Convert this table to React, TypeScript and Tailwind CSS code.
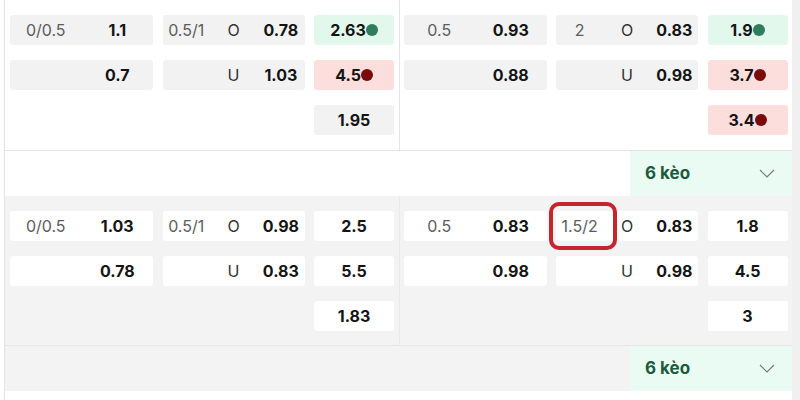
import React from "react";

type Tone = "gray" | "white";
type Move = "up" | "down" | undefined;

type Side = {
  hdp: [string, string][];
  ou: [string, string, string][];
  x12: [string, Move][];
};

const cellBg = (tone: Tone) => (tone === "gray" ? "bg-[#f2f2f2]" : "bg-white");

const HdpCell = ({ line, odds, tone }: { line: string; odds: string; tone: Tone }) => (
  <div className={`w-[143px] h-[30px] rounded-[3px] flex items-center ${cellBg(tone)}`}>
    <span className="flex-1 text-center text-[#5c5c5c]">{line}</span>
    <span className="flex-1 text-center font-bold text-[#141414]">{odds}</span>
  </div>
);

const OuCell = ({
  line,
  side,
  odds,
  tone,
  marked,
}: {
  line: string;
  side: string;
  odds: string;
  tone: Tone;
  marked?: boolean;
}) => (
  <div className={`relative w-[142px] h-[30px] rounded-[3px] flex items-center ${cellBg(tone)}`}>
    <span className="flex-1 text-center text-[#5c5c5c]">{line}</span>
    <span className="flex-1 text-center text-[#333]">{side}</span>
    <span className="flex-1 text-center font-bold text-[#141414]">{odds}</span>
    {marked && (
      <div className="absolute left-[-7px] top-[-9px] w-[68px] h-[48px] rounded-[10px] border-[4px] border-[#c4262e]" />
    )}
  </div>
);

const X12Cell = ({ value, move, tone }: { value: string; move: Move; tone: Tone }) => {
  const bg = move === "up" ? "bg-[#e3f8ec]" : move === "down" ? "bg-[#fcdedc]" : cellBg(tone);
  return (
    <div className={`w-[80px] h-[30px] rounded-[3px] flex items-center justify-center ${bg}`}>
      <span className="font-bold text-[#141414]">{value}</span>
      {move === "up" && <span className="w-[12px] h-[12px] rounded-full bg-[#2f7d5c]" />}
      {move === "down" && <span className="w-[12px] h-[12px] rounded-full bg-[#7b0a0a]" />}
    </div>
  );
};

const Half = ({ data, tone, pl, mark }: { data: Side; tone: Tone; pl: string; mark?: boolean }) => (
  <div className={`flex-1 flex flex-col gap-[15px] pt-[15px] ${pl}`}>
    {[0, 1, 2].map((r) => (
      <div key={r} className="flex gap-[9.5px] h-[30px]">
        {data.hdp[r] ? (
          <HdpCell line={data.hdp[r][0]} odds={data.hdp[r][1]} tone={tone} />
        ) : (
          <div className="w-[143px]" />
        )}
        {data.ou[r] ? (
          <OuCell
            line={data.ou[r][0]}
            side={data.ou[r][1]}
            odds={data.ou[r][2]}
            tone={tone}
            marked={mark && r === 0}
          />
        ) : (
          <div className="w-[142px]" />
        )}
        <X12Cell value={data.x12[r][0]} move={data.x12[r][1]} tone={tone} />
      </div>
    ))}
  </div>
);

const Footer = ({ bg }: { bg: string }) => (
  <div className={`h-[45px] flex justify-end ${bg}`}>
    <div className="w-[162px] bg-[#eafbf3] flex items-center justify-between pl-[15px] pr-[17px]">
      <span className="text-[17px] font-bold text-[#1c5a3d]">6 kèo</span>
      <svg width="16" height="9" viewBox="0 0 16 9" fill="none">
        <polyline points="1,1 8,8 15,1" stroke="#7a7a7a" strokeWidth="1.2" />
      </svg>
    </div>
  </div>
);

const match1: [Side, Side] = [
  {
    hdp: [["0/0.5", "1.1"], ["", "0.7"]],
    ou: [["0.5/1", "O", "0.78"], ["", "U", "1.03"]],
    x12: [["2.63", "up"], ["4.5", "down"], ["1.95", undefined]],
  },
  {
    hdp: [["0.5", "0.93"], ["", "0.88"]],
    ou: [["2", "O", "0.83"], ["", "U", "0.98"]],
    x12: [["1.9", "up"], ["3.7", "down"], ["3.4", "down"]],
  },
];

const match2: [Side, Side] = [
  {
    hdp: [["0/0.5", "1.03"], ["", "0.78"]],
    ou: [["0.5/1", "O", "0.98"], ["", "U", "0.83"]],
    x12: [["2.5", undefined], ["5.5", undefined], ["1.83", undefined]],
  },
  {
    hdp: [["0.5", "0.83"], ["", "0.98"]],
    ou: [["1.5/2", "O", "0.83"], ["", "U", "0.98"]],
    x12: [["1.8", undefined], ["4.5", undefined], ["3", undefined]],
  },
];

export default function App() {
  return (
    <div
      className="w-[800px] h-[400px] overflow-hidden flex bg-white text-[16px] leading-none"
      style={{ fontFamily: "Inter, 'Noto Sans', sans-serif" }}
    >
      <div className="w-[4px]" />
      <div className="w-[788px] flex flex-col border-l border-[#e4e4e4]">
        {/* match 1 */}
        <div className="h-[150px] flex bg-white">
          <Half data={match1[0]} tone="gray" pl="pl-[5px]" />
          <div className="w-px bg-[#e4e4e4]" />
          <Half data={match1[1]} tone="gray" pl="pl-[4px]" />
        </div>
        <div className="border-t border-[#e4e4e4]">
          <Footer bg="bg-white" />
        </div>

        {/* match 2 */}
        <div className="h-[149px] flex bg-[#f3f3f3]">
          <Half data={match2[0]} tone="white" pl="pl-[5px]" />
          <div className="w-px bg-[#e9e9e9]" />
          <Half data={match2[1]} tone="white" pl="pl-[4px]" mark />
        </div>
        <div className="border-t border-[#e6e6e6]">
          <Footer bg="bg-[#f3f3f3]" />
        </div>
        <div className="flex-1 bg-white" />
      </div>
      <div className="w-[8px] bg-[#f0f0f0]" />
    </div>
  );
}
